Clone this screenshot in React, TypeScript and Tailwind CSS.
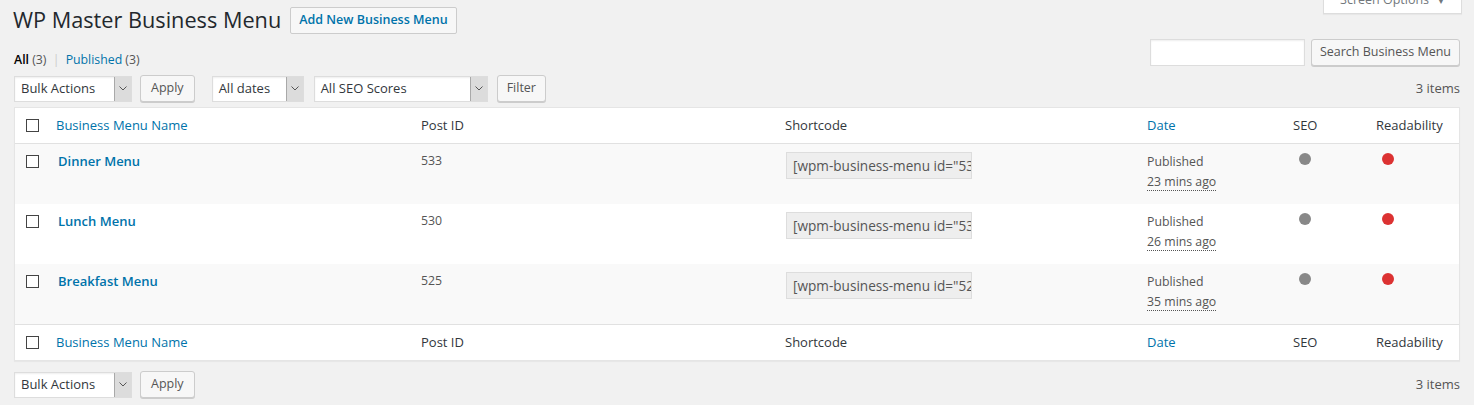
const font = { fontFamily: '"Open Sans", "Noto Sans", sans-serif' };

interface MenuRow {
  name: string;
  id: number;
  ago: string;
  shade: boolean;
}

const rows: MenuRow[] = [
  { name: "Dinner Menu", id: 533, ago: "23 mins ago", shade: true },
  { name: "Lunch Menu", id: 530, ago: "26 mins ago", shade: false },
  { name: "Breakfast Menu", id: 525, ago: "35 mins ago", shade: true },
];

function Select(props: { label: string; width: string }) {
  return (
    <div className={`flex h-[26px] ${props.width} items-stretch border border-[#ddd] bg-white shadow-[inset_0_1px_2px_rgba(0,0,0,0.07)]`}>
      <span className="flex flex-1 items-center pl-[6px] text-[13px] text-[#32373c]">{props.label}</span>
      <span className="flex w-[17px] items-center justify-center border-l border-[#a9a9a9] bg-[#dcdcdc]">
        <svg width="8" height="5" viewBox="0 0 8 5" fill="none">
          <path d="M0.5 0.5 L4 4 L7.5 0.5" stroke="#555" strokeWidth="1" />
        </svg>
      </span>
    </div>
  );
}

function Button(props: { label: string; className?: string }) {
  return (
    <button className={`h-[27px] rounded-[3px] border border-[#ccc] bg-[#f7f7f7] text-[12.5px] text-[#555] shadow-[0_1px_0_#ccc] ${props.className ?? "px-[10px]"}`}>
      {props.label}
    </button>
  );
}

function Checkbox() {
  return <span className="block h-[13px] w-[13px] border border-[#444] bg-white" />;
}

function HeaderRow(props: { top: boolean }) {
  return (
    <div className={`flex h-[36px] items-center bg-white text-[13px] text-[#32373c] ${props.top ? "border-b" : "border-t"} border-[#e1e1e1]`}>
      <div className="w-[33px] pl-[11px]"><Checkbox /></div>
      <div className="w-[365px] pl-[8px] text-[#0073aa]">Business Menu Name</div>
      <div className="w-[364px] pl-[8px]">Post ID</div>
      <div className="w-[362px] pl-[8px]">Shortcode</div>
      <div className="w-[146px] pl-[8px] text-[#0073aa]">Date</div>
      <div className="w-[83px] pl-[8px]">SEO</div>
      <div className="flex-1 pl-[8px]">Readability</div>
    </div>
  );
}

function Row(props: MenuRow) {
  return (
    <div className={`flex h-[60px] items-start pt-[8px] text-[12.3px] text-[#555] ${props.shade ? "bg-[#f9f9f9]" : "bg-white"}`}>
      <div className="w-[33px] pl-[11px] pt-[3px]"><Checkbox /></div>
      <div className="w-[365px] pl-[10px] text-[13px] font-semibold text-[#0073aa]">{props.name}</div>
      <div className="w-[364px] pl-[8px]">{props.id}</div>
      <div className="w-[362px] pl-[9px]">
        <div className="h-[27px] w-[186px] overflow-hidden whitespace-nowrap border border-[#ddd] bg-[#eee] pl-[6px] pt-[4px] text-[13.6px] leading-[18px] text-[#555]">
          [wpm-business-menu id="{props.id}"]
        </div>
      </div>
      <div className="w-[146px] pl-[8px] leading-[20px]">
        <div>Published</div>
        <span className="border-b border-dotted border-[#555]">{props.ago}</span>
      </div>
      <div className="w-[83px] pl-[14px] pt-[1px]">
        <span className="block h-[12px] w-[12px] rounded-full bg-[#888]" />
      </div>
      <div className="flex-1 pl-[14px] pt-[1px]">
        <span className="block h-[12px] w-[12px] rounded-full bg-[#dc3232]" />
      </div>
    </div>
  );
}

export default function App() {
  return (
    <div style={font} className="relative h-[405px] w-[1474px] overflow-hidden bg-[#f1f1f1] px-[14px]">
      <div className="absolute right-[12px] top-[-13px] flex h-[27px] items-center gap-[8px] border border-[#ddd] bg-white px-[16px] text-[12.5px] text-[#72777c] shadow-[0_1px_1px_rgba(0,0,0,0.04)]">
        Screen Options <span className="text-[8px]">▼</span>
      </div>

      <div className="flex items-center gap-[9px] pt-[6px]">
        <h1 className="-ml-[1px] h-[28px] text-[21.7px] leading-[28px] text-[#23282d]">WP Master Business Menu</h1>
        <button className="mt-[1px] h-[27px] rounded-[2px] border border-[#ccc] bg-[#f7f7f7] px-[8px] text-[12.5px] font-semibold text-[#0073aa]">
          Add New Business Menu
        </button>
      </div>

      <div className="mt-[5px] flex h-[27px] items-start justify-between">
        <div className="pt-[11px] text-[12.3px] leading-[20px] text-[#555]">
          <span className="font-semibold text-black">All</span> (3) <span className="mx-[3px] text-[#ccc]">|</span>{" "}
          <span className="text-[#0073aa]">Published</span> (3)
        </div>
        <div className="flex gap-[6px]">
          <div className="h-[27px] w-[155px] border border-[#ddd] bg-white shadow-[inset_0_1px_2px_rgba(0,0,0,0.07)]" />
          <Button label="Search Business Menu" className="px-[8px]" />
        </div>
      </div>

      <div className="mt-[9px] flex items-center">
        <Select label="Bulk Actions" width="w-[118px]" />
        <Button label="Apply" className="ml-[8px] px-[10px]" />
        <Select label="All dates" width="w-[92px] ml-[17px]" />
        <Select label="All SEO Scores" width="w-[174px] ml-[10px]" />
        <Button label="Filter" className="ml-[9px] px-[9px]" />
        <span className="ml-auto text-[13px] text-[#555]">3 items</span>
      </div>

      <div className="mt-[5px] border border-[#e5e5e5] bg-white shadow-[0_1px_1px_rgba(0,0,0,0.04)]">
        <HeaderRow top />
        {rows.map((r) => (
          <Row key={r.id} {...r} />
        ))}
        <HeaderRow top={false} />
      </div>

      <div className="mt-[10px] flex items-center">
        <Select label="Bulk Actions" width="w-[118px]" />
        <Button label="Apply" className="ml-[8px] px-[10px]" />
        <span className="ml-auto text-[13px] text-[#555]">3 items</span>
      </div>
    </div>
  );
}
